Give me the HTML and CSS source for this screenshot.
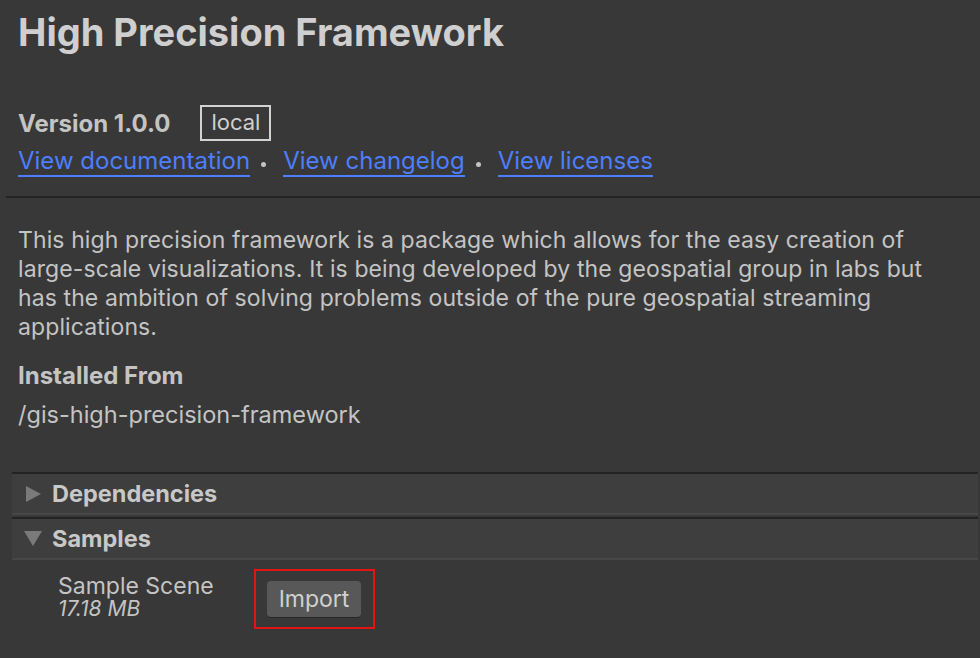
FILE: index.html
```html
<!DOCTYPE html>
<html>
<head>
<meta charset="utf-8">
<link rel="stylesheet" href="styles.css">
</head>
<body>
<div class="page">
  <div class="head">
    <h1 class="title">High Precision Framework</h1>
    <div class="version-row">
      <span class="version">Version 1.0.0</span>
      <span class="tag">local</span>
    </div>
    <div class="links">
      <a class="link">View documentation</a>
      <span class="dot"></span>
      <a class="link">View changelog</a>
      <span class="dot"></span>
      <a class="link">View licenses</a>
    </div>
  </div>
  <div class="divider"></div>
  <div class="body">
    <p class="desc">This high precision framework is a package which allows for the easy creation of large-scale visualizations. It is being developed by the geospatial group in labs but has the ambition of solving problems outside of the pure geospatial streaming applications.</p>
    <div class="label">Installed From</div>
    <div class="path">/gis-high-precision-framework</div>
  </div>
  <div class="panel">
    <div class="foldout">
      <div class="fold-head">
        <svg class="arrow" width="16" height="18" viewBox="0 0 16 18"><polygon points="0,1 15,9 0,17" fill="#7a7a7a"/></svg>
        <span>Dependencies</span>
      </div>
    </div>
    <div class="foldout">
      <div class="fold-head">
        <svg class="arrow down" width="18" height="16" viewBox="0 0 18 16"><polygon points="0,0 18,0 9,15" fill="#7a7a7a"/></svg>
        <span>Samples</span>
      </div>
    </div>
    <div class="sample">
      <div class="sample-info">
        <div class="sample-name">Sample Scene</div>
        <div class="sample-size">17.18 MB</div>
      </div>
      <div class="highlight">
        <button class="btn">Import</button>
      </div>
    </div>
  </div>
</div>
</body>
</html>
```
FILE: styles.css
```css
html, body {
  margin: 0;
  padding: 0;
  background: #383838;
}
body {
  width: 980px;
  height: 658px;
  overflow: hidden;
  font-family: Inter, "Noto Sans", sans-serif;
  color: #c4c4c4;
}
.page {
  display: flex;
  flex-direction: column;
}
.head {
  padding: 10px 0 0 18px;
}
.title {
  margin: 0;
  font-size: 38px;
  line-height: 44px;
  font-weight: 700;
  color: #cfcfcf;
}
.version-row {
  display: flex;
  align-items: center;
  margin-top: 51px;
  height: 36px;
}
.version {
  font-size: 24px;
  font-weight: 700;
  line-height: 36px;
  padding-top: 1px;
  color: #c4c4c4;
}
.tag {
  margin-left: 30px;
  box-sizing: border-box;
  height: 36px;
  width: 71px;
  border: 2px solid #d2d2d2;
  font-size: 22px;
  line-height: 30px;
  text-align: center;
  color: #d0d0d0;
}
.links {
  display: flex;
  align-items: center;
  margin-top: 5px;
  height: 32px;
}
.link {
  font-size: 24px;
  line-height: 28px;
  color: #4c7eff;
  border-bottom: 2px solid #4c7eff;
}
.dot {
  width: 5px;
  height: 5px;
  border-radius: 50%;
  background: #c4c4c4;
  margin: 4px 17px 0 11px;
}
.divider {
  margin: 18px 0 0 6px;
  height: 2px;
  background: #232323;
}
.body {
  padding: 0 18px 0 18px;
}
.desc {
  margin: 28px 0 0 0;
  font-size: 23px;
  letter-spacing: 0.1px;
  line-height: 29px;
  width: 944px;
}
.label {
  margin-top: 20px;
  font-size: 24px;
  font-weight: 700;
  line-height: 28px;
}
.path {
  margin-top: 11px;
  font-size: 23.5px;
  line-height: 28px;
}
.panel {
  margin: 43px 2px 0 12px;
}
.foldout {
  border-top: 2px solid #232323;
  border-bottom: 2px solid #474747;
  margin-bottom: 2px;
  background: #3e3e3e;
}
.fold-head {
  height: 39px;
  display: flex;
  align-items: center;
  padding-left: 14px;
  font-size: 23.5px;
  font-weight: 700;
  color: #c8c8c8;
}
.arrow {
  width: 16px;
  margin-right: 10px;
}
.arrow.down {
  width: 18px;
  margin-left: -2px;
  margin-right: 10px;
}
.sample {
  display: flex;
  align-items: flex-start;
  padding: 7px 0 0 46px;
}
.sample-info {
  width: 196px;
  padding-top: 5px;
}
.sample-name {
  font-size: 23px;
  line-height: 24px;
}
.sample-size {
  font-size: 21px;
  font-style: italic;
  line-height: 22px;
}
.highlight {
  border: 2px solid #e31414;
  padding: 10px 12px 9px 11px;
}
.btn {
  display: block;
  width: 94px;
  height: 37px;
  box-sizing: border-box;
  background: #585858;
  border: none;
  border-bottom: 1px solid #262626;
  border-radius: 4px;
  font-family: Inter, "Noto Sans", sans-serif;
  font-size: 23px;
  color: #d0d0d0;
  padding: 0;
  line-height: 36px;
}
```
